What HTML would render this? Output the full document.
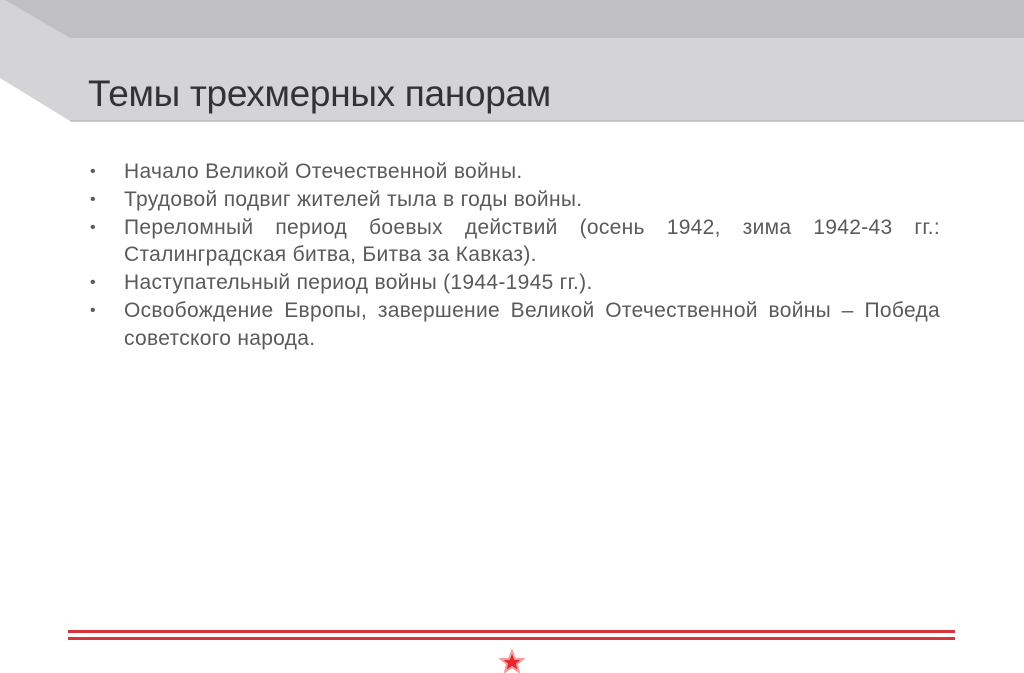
<!DOCTYPE html>
<html><head><meta charset="utf-8"><style>
body{margin:0;width:1024px;height:673px;background:#fff;position:relative;overflow:hidden;font-family:"Liberation Sans",sans-serif}
h1{position:absolute;left:88px;top:73px;margin:0;font-weight:normal;font-size:37px;color:#333;letter-spacing:-0.3px}
ul{position:absolute;left:90px;top:158px;width:850px;margin:0;padding:0;list-style:none;color:#5a5a5a;font-size:21px;letter-spacing:0.3px;line-height:27.8px}
li{position:relative;padding-left:34px;text-align:justify}
li:before{content:"•";position:absolute;left:0;font-size:16px}
.l{position:absolute;left:68px;width:887px;background:#d9343c}
</style></head><body>
<svg width="1024" height="673" style="position:absolute;left:0;top:0">
<polygon points="0,0 1024,0 1024,121 70,121 0,78" fill="#d4d4d6"/>
<polygon points="5,0 1024,0 1024,38 70,38" fill="#c0c0c2"/>
<line x1="70" y1="121" x2="1024" y2="121" stroke="#bcbcbe" stroke-width="1.5"/>
<polygon points="512,651 515,659 523,659 517,664 519,672 512,667 505,672 507,664 501,659 509,659" fill="#e8262d" stroke="#f2a0a0" stroke-width="2"/>
</svg>
<div class="l" style="top:630px;height:3px"></div>
<div class="l" style="top:637px;height:3px"></div>
<h1>Темы трехмерных панорам</h1>
<ul>
<li>Начало Великой Отечественной войны.</li>
<li>Трудовой подвиг жителей тыла в годы войны.</li>
<li>Переломный период боевых действий (осень 1942, зима 1942-43 гг.: Сталинградская битва, Битва за Кавказ).</li>
<li>Наступательный период войны (1944-1945 гг.).</li>
<li>Освобождение Европы, завершение Великой Отечественной войны – Победа советского народа.</li>
</ul>
</body></html>
